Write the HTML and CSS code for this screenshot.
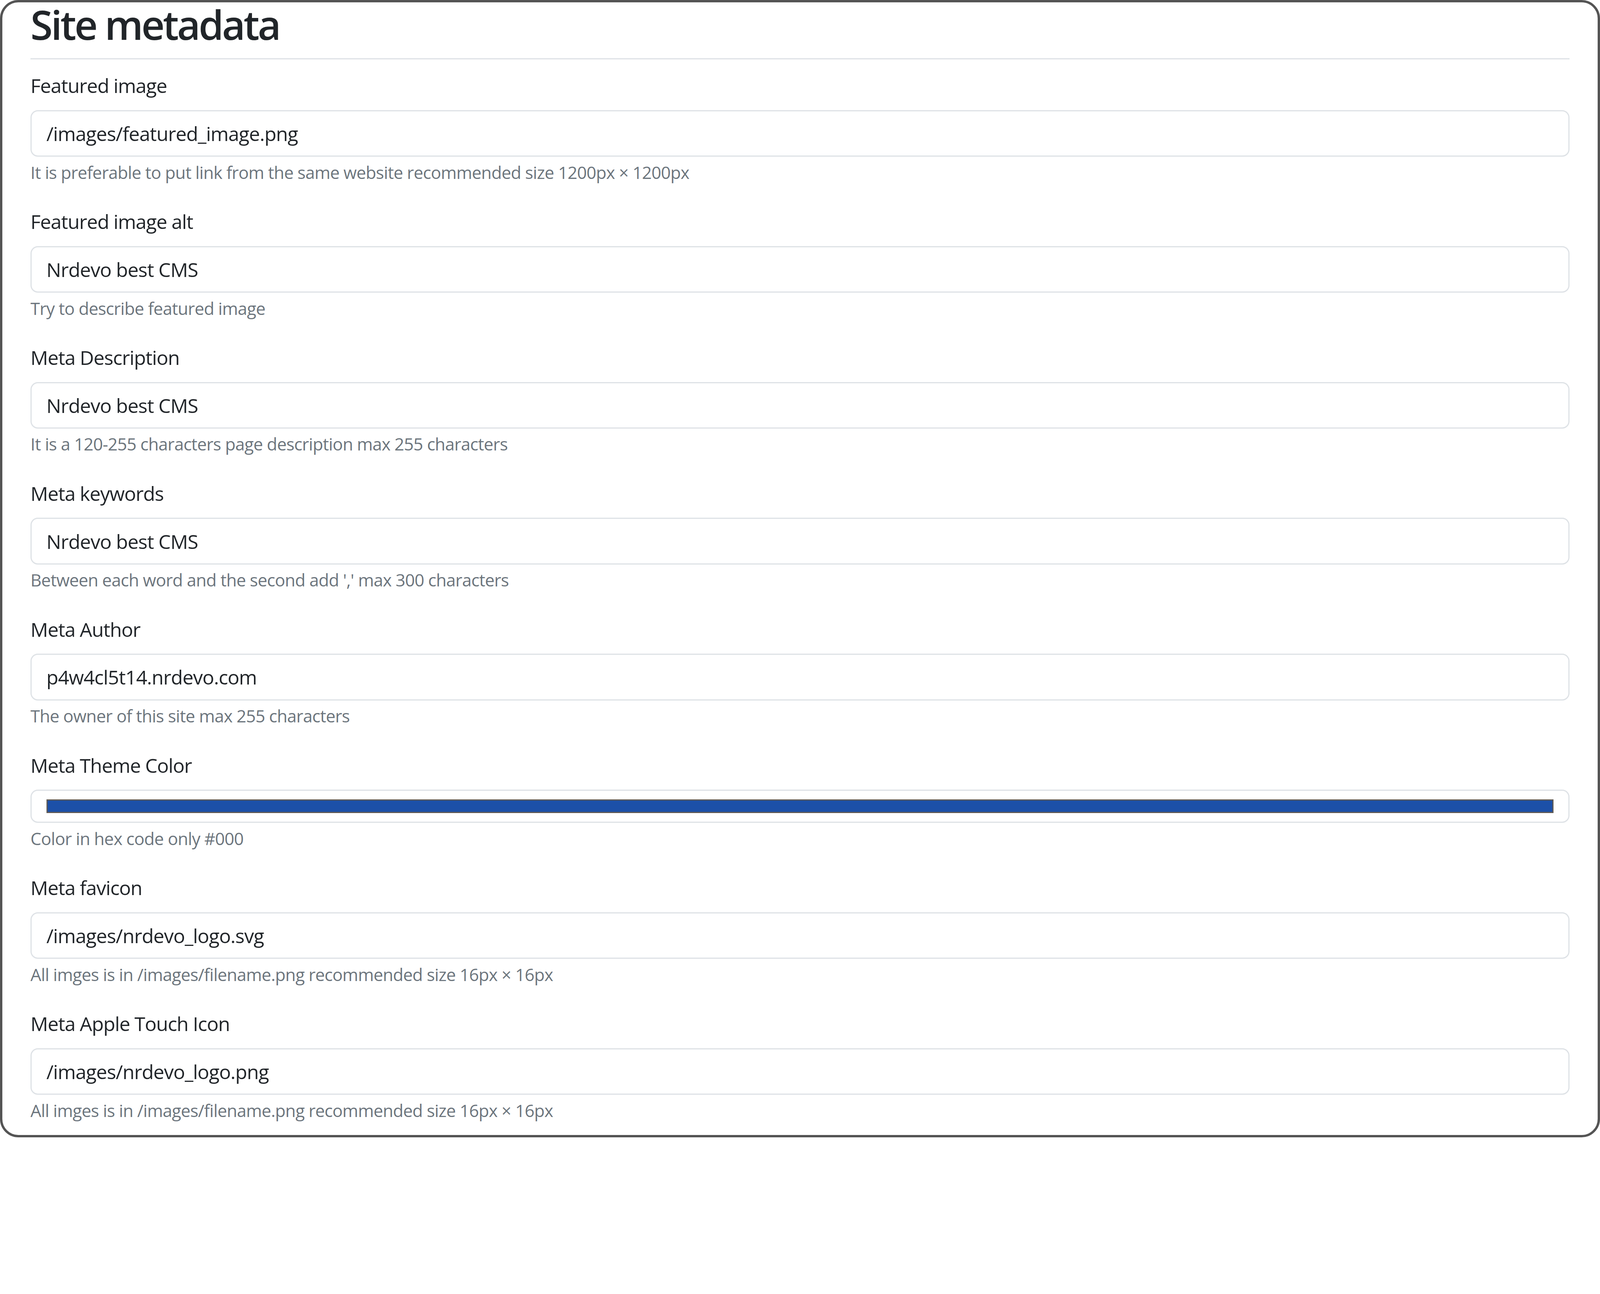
FILE: index.html
```html
<!DOCTYPE html>
<html lang="en">
<head>
<meta charset="utf-8">
<title>Site metadata</title>
<link rel="stylesheet" href="styles.css">
</head>
<body>
<div class="frame">
  <h2 class="title">Site metadata</h2>
  <form class="fields">
    <div class="field">
      <label class="label" for="f1">Featured image</label>
      <input class="input" id="f1" type="text" value="/images/featured_image.png">
      <div class="help">It is preferable to put link from the same website recommended size 1200px × 1200px</div>
    </div>
    <div class="field">
      <label class="label" for="f2">Featured image alt</label>
      <input class="input" id="f2" type="text" value="Nrdevo best CMS">
      <div class="help">Try to describe featured image</div>
    </div>
    <div class="field">
      <label class="label" for="f3">Meta Description</label>
      <input class="input" id="f3" type="text" value="Nrdevo best CMS">
      <div class="help">It is a 120-255 characters page description max 255 characters</div>
    </div>
    <div class="field">
      <label class="label" for="f4">Meta keywords</label>
      <input class="input" id="f4" type="text" value="Nrdevo best CMS">
      <div class="help">Between each word and the second add ',' max 300 characters</div>
    </div>
    <div class="field">
      <label class="label" for="f5">Meta Author</label>
      <input class="input" id="f5" type="text" value="p4w4cl5t14.nrdevo.com">
      <div class="help">The owner of this site max 255 characters</div>
    </div>
    <div class="field">
      <label class="label">Meta Theme Color</label>
      <div class="color-input"><div class="swatch"></div></div>
      <div class="help">Color in hex code only #000</div>
    </div>
    <div class="field">
      <label class="label" for="f7">Meta favicon</label>
      <input class="input" id="f7" type="text" value="/images/nrdevo_logo.svg">
      <div class="help">All imges is in /images/filename.png recommended size 16px × 16px</div>
    </div>
    <div class="field">
      <label class="label" for="f8">Meta Apple Touch Icon</label>
      <input class="input" id="f8" type="text" value="/images/nrdevo_logo.png">
      <div class="help">All imges is in /images/filename.png recommended size 16px × 16px</div>
    </div>
  </form>
</div>
</body>
</html>
```
FILE: styles.css
```css
html {
  zoom: 3.1348;
  overflow: hidden;
  background: #ffffff;
}

body {
  margin: 0;
  overflow: hidden;
  font-family: "Open Sans", "Noto Sans", sans-serif;
  color: #212529;
  background: #ffffff;
}

.frame {
  box-sizing: border-box;
  height: 928.6px;
  border: 2px solid #545454;
  border-radius: 15px;
  padding: 0 23px;
  background: #ffffff;
}

.title {
  margin: 0 0 9.5px 0;
  padding: 0 0 9.5px 0;
  border-bottom: 1px solid #dee2e6;
  font-size: 33px;
  line-height: 36px;
  font-weight: 600;
  letter-spacing: -0.045em;
  color: #212529;
}

.fields {
  margin: 0;
}

.field {
  margin-bottom: 17.5px;
}

.label {
  display: block;
  margin-bottom: 8px;
  font-size: 16px;
  line-height: 24px;
  letter-spacing: -0.023em;
  color: #212529;
}

.input {
  display: block;
  box-sizing: border-box;
  width: 100%;
  height: 38px;
  margin: 0;
  padding: 6px 12px;
  border: 1px solid #dee2e6;
  border-radius: 6px;
  font-family: inherit;
  font-size: 16px;
  line-height: 24px;
  letter-spacing: -0.02em;
  color: #212529;
  background: #ffffff;
  outline: none;
}

.color-input {
  box-sizing: border-box;
  height: 27px;
  padding: 7px 12px;
  border: 1px solid #dee2e6;
  border-radius: 6px;
  background: #ffffff;
}

.swatch {
  box-sizing: border-box;
  height: 11px;
  border: 1px solid #5f5a55;
  background: #1c50a8;
}

.help {
  margin-top: 2.5px;
  font-size: 14px;
  line-height: 21px;
  letter-spacing: -0.019em;
  color: #6c757d;
}
```
